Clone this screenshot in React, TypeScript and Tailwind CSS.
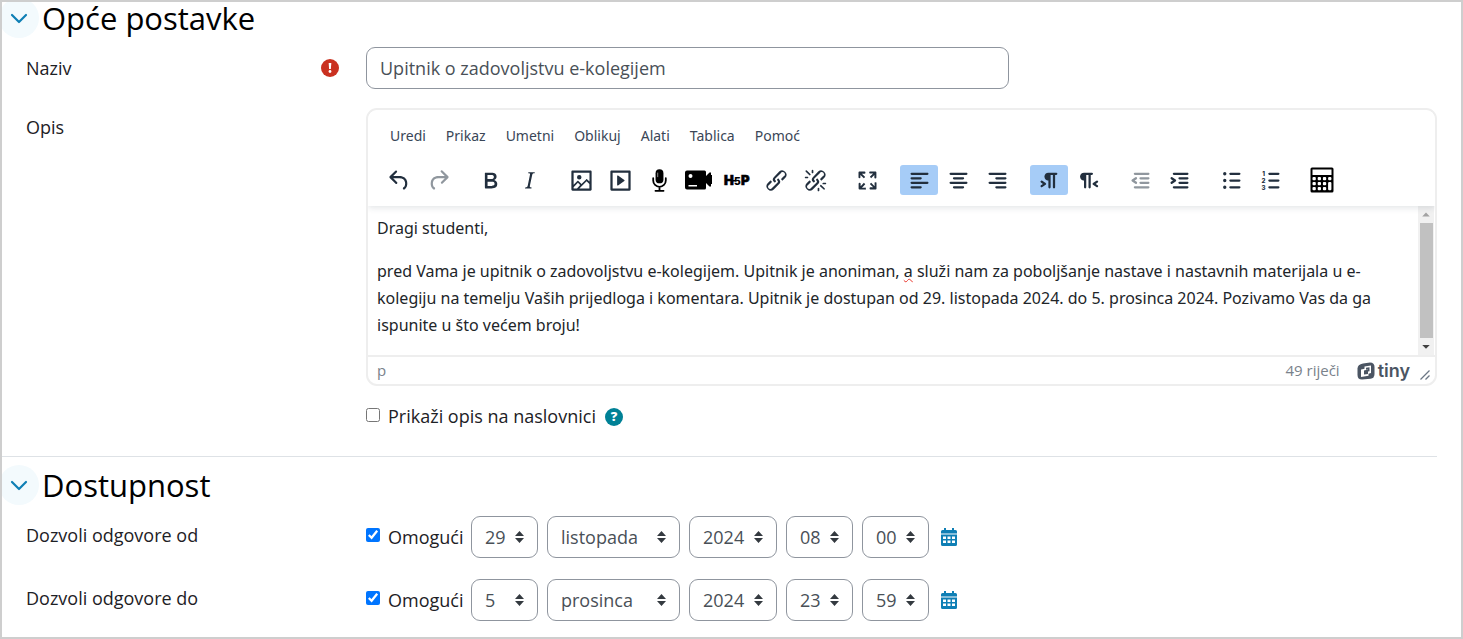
import React from "react";

const ICON = "size-[27px] shrink-0 fill-current";

const LINK =
  "M6.2 12.3a1 1 0 0 1 1.4 1.4l-2 2a2 2 0 1 0 2.6 2.8l4.8-4.8a1 1 0 0 0 0-1.4 1 1 0 1 1 1.4-1.3 2.9 2.9 0 0 1 0 4L9.6 20a3.9 3.9 0 0 1-5.5-5.5l2-2Zm11.6-.6a1 1 0 0 1-1.4-1.4l2-2a2 2 0 1 0-2.6-2.8L11 10.3a1 1 0 0 0 0 1.4A1 1 0 1 1 9.6 13a2.9 2.9 0 0 1 0-4L14.4 4a3.9 3.9 0 0 1 5.5 5.5l-2 2Z";

const PATHS: Record<string, string> = {
  undo: "M6.4 8H12c3.7 0 6.2 2 6.8 5.1.6 2.7-.4 5.6-2.3 6.8a1 1 0 0 1-1-1.8c1.1-.6 1.8-2.7 1.4-4.6-.5-2.1-2.1-3.5-4.9-3.5H6.4l3.3 3.3a1 1 0 1 1-1.4 1.4l-5-5a1 1 0 0 1 0-1.4l5-5a1 1 0 0 1 1.4 1.4L6.4 8Z",
  redo: "M17.6 10H12c-2.8 0-4.4 1.4-4.9 3.5-.4 2 .3 4 1.4 4.6a1 1 0 1 1-1 1.8c-2-1.2-2.9-4.1-2.3-6.8.6-3 3-5.1 6.8-5.1h5.6l-3.3-3.3a1 1 0 1 1 1.4-1.4l5 5a1 1 0 0 1 0 1.4l-5 5a1 1 0 0 1-1.4-1.4l3.3-3.3Z",
  bold: "M7.8 19c-.3 0-.5 0-.6-.2l-.2-.5V5.7c0-.2 0-.4.2-.5l.6-.2h5c1.5 0 2.7.3 3.5 1 .7.6 1.1 1.4 1.1 2.5a3 3 0 0 1-.6 1.9c-.4.6-1 1-1.6 1.2.4.1.9.3 1.3.6s.8.7 1 1.2c.4.4.5 1 .5 1.6 0 1.3-.4 2.3-1.3 3-.8.7-2.1 1-3.8 1H7.8Zm5-8.3c.6 0 1.2-.1 1.6-.5.4-.3.6-.7.6-1.3 0-1.1-.8-1.7-2.3-1.7H9.3v3.5h3.4Zm.5 6c.7 0 1.3-.1 1.7-.4.4-.4.6-.9.6-1.5s-.2-1-.7-1.4c-.4-.3-1-.4-2-.4H9.4v3.8h4Z",
  italic: "m16.7 4.7-.1.9h-.3c-.6 0-1 0-1.4.3-.3.3-.4.6-.5 1.1l-2.1 9.8v.6c0 .5.4.8 1.4.8h.2l-.2.8H8l.2-.8h.2c1.1 0 1.8-.5 2-1.5l2-9.8.1-.5c0-.6-.4-.8-1.4-.8h-.3l.2-.9h5.8Z",
  image: "m5 15.7 3.3-3.2c.3-.3.7-.3 1 0L12 15l4.1-4c.3-.4.8-.4 1 0l2 1.9V5H5v10.7ZM5 18V19h3l2.8-2.9-2-2L5 17.9Zm14-3-2.5-2.4-6.4 6.5H19v-4ZM4 3h16c.6 0 1 .4 1 1v16c0 .6-.4 1-1 1H4a1 1 0 0 1-1-1V4c0-.6.4-1 1-1Zm6 8a2 2 0 1 0 0-4 2 2 0 0 0 0 4Z",
  media: "M4 3h16c.6 0 1 .4 1 1v16c0 .6-.4 1-1 1H4a1 1 0 0 1-1-1V4c0-.6.4-1 1-1Zm1 2v14h14V5H5Zm4.800 2.600 5.600 4a.5.5 0 0 1 0 .8l-5.600 4A.5.5 0 0 1 9 16V8a.5.5 0 0 1 .8-.4Z",
  link: LINK,
  unlink:
    LINK +
    "M7.6 6.3a.8.8 0 0 1-1 1.1L3.3 4.2a.7.7 0 1 1 1-1l3.2 3.1ZM5.1 8.6a.8.8 0 0 1 0 1.5H3a.8.8 0 0 1 0-1.5H5Zm5-3.5a.8.8 0 0 1-1.5 0V3a.8.8 0 0 1 1.5 0V5Zm6 11.8a.8.8 0 0 1 1-1l3.2 3.2a.8.8 0 0 1-1 1L16 17Zm-2.2 2a.8.8 0 0 1 1.5 0V21a.8.8 0 0 1-1.5 0V19Zm5-3.5a.7.7 0 1 1 0-1.5H21a.8.8 0 0 1 0 1.5H19Z",
  fullscreen:
    "m15.3 10-1.2-1.3 2.9-3h-2.3a.9.9 0 1 1 0-1.7H19c.5 0 .9.4.9.9v4.4a.9.9 0 1 1-1.8 0V7l-2.9 3Zm0 4 3 3v-2.3a.9.9 0 1 1 1.7 0V19c0 .5-.4.9-.9.9h-4.4a.9.9 0 1 1 0-1.8H17l-3-2.9 1.3-1.2ZM10 15.4l-2.9 3h2.3a.9.9 0 1 1 0 1.7H5a.9.9 0 0 1-.9-.9v-4.4a.9.9 0 1 1 1.8 0V17l2.9-3 1.2 1.3ZM8.7 10 5.7 7v2.3a.9.9 0 0 1-1.7 0V5c0-.5.4-.9.9-.9h4.4a.9.9 0 0 1 0 1.8H7l3 2.900-1.300 1.200Z",
  left: "M5 5h14c.6 0 1 .4 1 1s-.4 1-1 1H5a1 1 0 1 1 0-2Zm0 4h8c.6 0 1 .4 1 1s-.4 1-1 1H5a1 1 0 1 1 0-2Zm0 8h8c.6 0 1 .4 1 1s-.4 1-1 1H5a1 1 0 0 1 0-2Zm0-4h14c.6 0 1 .4 1 1s-.4 1-1 1H5a1 1 0 0 1 0-2Z",
  center:
    "M5 5h14c.6 0 1 .4 1 1s-.4 1-1 1H5a1 1 0 1 1 0-2Zm3 4h8c.6 0 1 .4 1 1s-.4 1-1 1H8a1 1 0 1 1 0-2Zm0 8h8c.6 0 1 .4 1 1s-.4 1-1 1H8a1 1 0 0 1 0-2Zm-3-4h14c.6 0 1 .4 1 1s-.4 1-1 1H5a1 1 0 0 1 0-2Z",
  right:
    "M5 5h14c.6 0 1 .4 1 1s-.4 1-1 1H5a1 1 0 1 1 0-2Zm6 4h8c.6 0 1 .4 1 1s-.4 1-1 1h-8a1 1 0 0 1 0-2Zm0 8h8c.6 0 1 .4 1 1s-.4 1-1 1h-8a1 1 0 0 1 0-2Zm-6-4h14c.6 0 1 .4 1 1s-.4 1-1 1H5a1 1 0 0 1 0-2Z",
  ltr: "M11 5h7a1 1 0 0 1 0 2h-1v11a1 1 0 0 1-2 0V7h-2v11a1 1 0 0 1-2 0v-6c-.5 0-1 0-1.4-.3A3.4 3.4 0 0 1 7.8 10a3.3 3.3 0 0 1 0-2.8 3.4 3.4 0 0 1 1.8-1.8L11 5ZM4.4 16.2 6.2 15l-1.8-1.2a1 1 0 0 1 1.2-1.6l3 2a1 1 0 0 1 0 1.6l-3 2a1 1 0 1 1-1.2-1.6Z",
  rtl: "M8 5h7a1 1 0 0 1 0 2h-1v11a1 1 0 0 1-2 0V7h-2v11a1 1 0 0 1-2 0v-6c-.5 0-1 0-1.4-.3A3.4 3.4 0 0 1 4.8 10a3.3 3.3 0 0 1 0-2.8 3.4 3.4 0 0 1 1.8-1.8L8 5Zm12.2 11.2a1 1 0 1 1-1.2 1.6l-3-2a1 1 0 0 1 0-1.6l3-2a1 1 0 1 1 1.2 1.6L18.4 15l1.8 1.2Z",
  outdent:
    "M7 5h12c.6 0 1 .4 1 1s-.4 1-1 1H7a1 1 0 1 1 0-2Zm5 4h7c.6 0 1 .4 1 1s-.4 1-1 1h-7a1 1 0 0 1 0-2Zm0 4h7c.6 0 1 .4 1 1s-.4 1-1 1h-7a1 1 0 0 1 0-2Zm-5 4h12a1 1 0 0 1 0 2H7a1 1 0 0 1 0-2Zm1.6-3.8a1 1 0 0 1-1.2 1.6l-3-2a1 1 0 0 1 0-1.6l3-2a1 1 0 0 1 1.2 1.6L6.8 12l1.8 1.2Z",
  indent:
    "M7 5h12c.6 0 1 .4 1 1s-.4 1-1 1H7a1 1 0 1 1 0-2Zm5 4h7c.6 0 1 .4 1 1s-.4 1-1 1h-7a1 1 0 0 1 0-2Zm0 4h7c.6 0 1 .4 1 1s-.4 1-1 1h-7a1 1 0 0 1 0-2Zm-5 4h12a1 1 0 0 1 0 2H7a1 1 0 0 1 0-2Zm-2.6-3.8L6.2 12l-1.8-1.2a1 1 0 0 1 1.2-1.6l3 2a1 1 0 0 1 0 1.6l-3 2a1 1 0 1 1-1.2-1.6Z",
  bullets:
    "M11 5h8a1 1 0 0 1 0 2h-8a1 1 0 0 1 0-2Zm0 6h8a1 1 0 0 1 0 2h-8a1 1 0 0 1 0-2Zm0 6h8a1 1 0 0 1 0 2h-8a1 1 0 0 1 0-2ZM4.500 6a1.500 1.500 0 1 0 3 0 1.500 1.500 0 1 0-3 0Zm0 6a1.500 1.500 0 1 0 3 0 1.500 1.500 0 1 0-3 0Zm0 6a1.500 1.500 0 1 0 3 0 1.500 1.500 0 1 0-3 0Z",
};

function Glyph({ name }: { name: string }) {
  return (
    <svg viewBox="0 0 24 24" className={ICON} fillRule="evenodd" aria-hidden="true">
      <path d={PATHS[name]} />
    </svg>
  );
}

function MicIcon() {
  return (
    <svg viewBox="0 0 24 24" className={ICON} aria-hidden="true">
      <rect x="8.500" y="2" width="7" height="12.500" rx="3.500" fill="#000" />
      <path d="M10.400 5v4" stroke="#999" strokeWidth=".8" />
      <path d="M6.400 10v2a5.600 5.600 0 0 0 11.200 0v-2M12 17.600v3.600M8.400 21.200h7.200" fill="none" stroke="#000" strokeWidth="1.600" strokeLinecap="round" />
    </svg>
  );
}

function CameraIcon() {
  return (
    <svg viewBox="0 0 27 20" className="h-5 w-[27px] shrink-0 fill-black" aria-hidden="true">
      <path fillRule="evenodd" d="M2 .5h17.500a1.500 1.500 0 0 1 1.500 1.500v4l3.500-3.500h1.500v2.500h1v9h-1v2.500h-1.500L21 13v5a1.500 1.500 0 0 1-1.500 1.500H2A2 2 0 0 1 0 17.500v-15a2 2 0 0 1 2-2ZM5.500 4a2 2 0 1 0 0 4 2 2 0 0 0 0-4ZM3.500 15v1.500H12V15H3.500Z" />
    </svg>
  );
}

function H5pIcon() {
  return (
    <svg viewBox="0 0 27 20" className="h-5 w-[27px] shrink-0 overflow-visible fill-black" aria-hidden="true">
      <g fontFamily="Inter, sans-serif" fontWeight="900">
        <text x="0" y="15" fontSize="13" stroke="#000" strokeWidth=".6">H</text>
        <text x="10" y="15" fontSize="10">5</text>
        <text x="17" y="15" fontSize="13" stroke="#000" strokeWidth=".6">P</text>
      </g>
      <path d="M9 10h3v1.500H9Z" />
    </svg>
  );
}

function NumberedIcon() {
  return (
    <svg viewBox="0 0 24 24" className={ICON} aria-hidden="true">
      <path d="M11 5h8a1 1 0 0 1 0 2h-8a1 1 0 0 1 0-2Zm0 6h8a1 1 0 0 1 0 2h-8a1 1 0 0 1 0-2Zm0 6h8a1 1 0 0 1 0 2h-8a1 1 0 0 1 0-2Z" />
      <g fontFamily="Inter, sans-serif" fontWeight="800" fontSize="5.500">
        <text x="4.600" y="8">1</text>
        <text x="4" y="14">2</text>
        <text x="4" y="20">3</text>
      </g>
    </svg>
  );
}

function CalculatorIcon() {
  return (
    <svg viewBox="0 0 24 26" className="h-[26px] w-6 shrink-0 fill-black" aria-hidden="true">
      <path fillRule="evenodd" d="M2 .5h20A1.500 1.500 0 0 1 23.500 2v22a1.500 1.500 0 0 1-1.500 1.500H2A1.500 1.500 0 0 1 .5 24V2A1.500 1.500 0 0 1 2 .5ZM2.500 2.500v5.500h19V2.500h-19Z" />
      <g fill="#fff">
        {[10, 15, 20].map((y) =>
          [2.5, 7.7, 12.9, 18.1].map((x) =>
            x > 18 && y > 15 ? null : <rect key={`${x}-${y}`} x={x} y={y} width="3.300" height={x > 18 && y > 14 ? 8.3 : 3.3} rx="1" />
          )
        )}
      </g>
    </svg>
  );
}

type Tool = { label: string; icon: React.ReactNode; active?: boolean; disabled?: boolean };

const g = (name: string) => <Glyph name={name} />;

const TOOLS: Tool[][] = [
  [{ label: "Poništi", icon: g("undo") }, { label: "Ponovi", icon: g("redo"), disabled: true }],
  [{ label: "Podebljano", icon: g("bold") }, { label: "Kurziv", icon: g("italic") }],
  [
    { label: "Slika", icon: g("image") },
    { label: "Multimedija", icon: g("media") },
    { label: "Snimi zvuk", icon: <MicIcon /> },
    { label: "Snimi video", icon: <CameraIcon /> },
    { label: "Umetni H5P", icon: <H5pIcon /> },
    { label: "Poveznica", icon: g("link") },
    { label: "Ukloni poveznicu", icon: g("unlink") },
  ],
  [{ label: "Cijeli zaslon", icon: g("fullscreen") }],
  [
    { label: "Poravnaj lijevo", icon: g("left"), active: true },
    { label: "Centriraj", icon: g("center") },
    { label: "Poravnaj desno", icon: g("right") },
  ],
  [{ label: "Slijeva nadesno", icon: g("ltr"), active: true }, { label: "Zdesna nalijevo", icon: g("rtl") }],
  [{ label: "Smanji uvlaku", icon: g("outdent"), disabled: true }, { label: "Povećaj uvlaku", icon: g("indent") }],
  [{ label: "Grafičke oznake", icon: g("bullets") }, { label: "Numerirani popis", icon: <NumberedIcon /> }],
  [{ label: "Uređivač jednadžbi", icon: <CalculatorIcon /> }],
];

const MENUS = ["Uredi", "Prikaz", "Umetni", "Oblikuj", "Alati", "Tablica", "Pomoć"];

function SectionHeading({ title }: { title: string }) {
  return (
    <div className="flex h-8 items-center gap-[3px]">
      <button type="button" aria-label={title} className="-ml-[3px] grid size-10 shrink-0 place-items-center rounded-full bg-[#f3fafd] text-[#0f7fb5]">
        <svg viewBox="0 0 20 20" className="size-5 fill-none stroke-current" strokeWidth="2.200" strokeLinecap="round" strokeLinejoin="round" aria-hidden="true">
          <path d="m3 7 7 7 7-7" />
        </svg>
      </button>
      <h2 className="text-[31px] leading-8 text-black">{title}</h2>
    </div>
  );
}

type RowProps = { label: string; htmlFor: string; required?: boolean; compact?: boolean; children: React.ReactNode };

function Row({ label, htmlFor, required, compact, children }: RowProps) {
  return (
    <div className="flex pl-6">
      <div className={`flex w-[340px] shrink-0 items-start justify-between pr-[27px] ${compact ? "pt-1.5" : "pt-2"}`}>
        <label htmlFor={htmlFor}>{label}</label>
        {required && (
          <svg viewBox="0 0 18 18" className="mt-1 size-[18px]" role="img" aria-label="Obavezno">
            <circle cx="9" cy="9" r="9" fill="#ca3120" />
            <path d="M7.700 4h2.600l-.4 6H8.100Z" fill="#fff" />
            <circle cx="9" cy="12.500" r="1.400" fill="#fff" />
          </svg>
        )}
      </div>
      <div className="min-w-0 flex-1">{children}</div>
    </div>
  );
}

function Picker({ label, value, width }: { label: string; value: string; width: string }) {
  return (
    <div className={`relative ${width}`}>
      <select aria-label={label} defaultValue={value} className="h-[42px] w-full appearance-none rounded-[9px] border border-[#8f959e] bg-white pl-[13px] text-[#495057]">
        <option>{value}</option>
      </select>
      <svg viewBox="0 0 9 12" className="pointer-events-none absolute top-[15px] right-3.5 h-3 w-[9px] fill-[#343a40]" aria-hidden="true">
        <path d="M4.500 0 9 5H0ZM4.500 12 0 7h9Z" />
      </svg>
    </div>
  );
}

function DateRow({ id, label, values }: { id: string; label: string; values: string[] }) {
  return (
    <Row label={label} htmlFor={id} compact>
      <div className="flex items-center gap-[9px]">
        <div className="flex items-center gap-2">
          <input id={id} type="checkbox" defaultChecked className="mb-1 size-3.5" />
          <label htmlFor={id} className="w-[74px]">Omogući</label>
        </div>
        <Picker label="Dan" value={values[0]} width="w-[67px]" />
        <Picker label="Mjesec" value={values[1]} width="w-[133px]" />
        <Picker label="Godina" value={values[2]} width="w-[88px]" />
        <Picker label="Sat" value={values[3]} width="w-[67px]" />
        <Picker label="Minuta" value={values[4]} width="w-[67px]" />
        <a href="#kalendar" aria-label="Kalendar" className="ml-[3px] text-[#0f7fb5]">
          <svg viewBox="0 0 16 18" className="h-[18px] w-4" aria-hidden="true">
            <path fill="currentColor" fillRule="evenodd" d="M3 0h2v2h6V0h2v2h1.500A1.500 1.500 0 0 1 16 3.500V5.500H0V3.500A1.500 1.500 0 0 1 1.500 2H3ZM0 6.500h16v10a1.500 1.500 0 0 1-1.500 1.500h-13A1.500 1.500 0 0 1 0 16.500ZM2 8.500v2.500h3V8.500Zm4.500 0v2.500h3V8.500Zm4.500 0v2.500h3V8.500ZM2 12.500V15h3v-2.500Zm4.500 0V15h3v-2.500Zm4.500 0V15h3v-2.500Z" />
          </svg>
        </a>
      </div>
    </Row>
  );
}

function Editor() {
  return (
    <div className="overflow-hidden rounded-[11px] border-2 border-[#eeeeee] font-['Noto_Sans',sans-serif]">
      <div className="relative z-10 bg-white px-3 pt-2 shadow-[0_2px_6px_rgba(34,47,62,0.12)]">
        <div role="menubar" className="flex h-9 items-center text-sm text-[#3a4657]">
          {MENUS.map((m) => (
            <button key={m} type="button" role="menuitem" className="px-2.5">{m}</button>
          ))}
        </div>
        <div role="toolbar" aria-label="Alatna traka" className="flex h-[52px] items-center gap-3.5">
          {TOOLS.map((group, i) => (
            <div key={i} className="flex gap-px">
              {group.map((t) => (
                <button
                  key={t.label}
                  type="button"
                  aria-label={t.label}
                  disabled={t.disabled}
                  className={`grid h-[30px] w-[38px] place-items-center rounded-[3px] ${t.active ? "bg-[#a6ccf7]" : ""} ${t.disabled ? "text-[#222f3e]/50" : "text-[#222f3e]"}`}
                >
                  {t.icon}
                </button>
              ))}
            </div>
          ))}
        </div>
      </div>
      <div className="flex border-b-2 border-[#eeeeee]">
        <div id="opis" role="textbox" aria-label="Opis" className="min-w-0 flex-1 px-[9px] pt-[9px] pb-4 text-base leading-[27px] text-[#212529]">
          <p className="mb-4">Dragi studenti,</p>
          <p>
            pred Vama je upitnik o zadovoljstvu e-kolegijem. Upitnik je anoniman,{" "}
            <span className="underline decoration-[#e8372c] decoration-wavy decoration-1">a</span> služi nam za poboljšanje nastave i nastavnih materijala u e-kolegiju na temelju Vaših prijedloga i komentara. Upitnik je dostupan od 29. listopada 2024. do 5. prosinca 2024. Pozivamo Vas da ga ispunite u što većem broju!
          </p>
        </div>
        <div className="mr-px flex w-4 flex-col items-center bg-[#f1f1f1]" aria-hidden="true">
          <svg viewBox="0 0 17 17" className="h-[17px] w-full"><path d="M8.500 6.500 12.500 10.500h-8Z" fill="#a3a3a3" /></svg>
          <div className="w-[13px] flex-1 bg-[#c1c1c1]" />
          <svg viewBox="0 0 17 17" className="h-[17px] w-full"><path d="M8.500 11 4.500 7h8Z" fill="#404040" /></svg>
        </div>
      </div>
      <div className="flex h-[27px] items-center pr-[5px] pl-[9px] font-['Open_Sans',sans-serif] text-[15px] text-[#7a828b]">
        <span className="flex-1">p</span>
        <span>49 riječi</span>
        <span className="ml-[17px] flex items-center gap-[3px] text-[#4b5563]">
          <svg viewBox="0 0 18 18" className="size-[18px]" aria-hidden="true">
            <path fill="currentColor" d="M6 1.500 13 .5q4.500 0 4.500 4.500v7q0 4-4 4.700L5 17.500q-4.500 0-4.500-4.500V6.500q0-4 5.500-5Z" />
            <path fill="#fff" fillRule="evenodd" d="M7.500 4.500 14 3.500v7.500l-2.500.7v2L4 15V7.500l3.500-.7ZM7 8.500v4l4-.5V7.500Z" />
            <path fill="currentColor" d="M9 5.800 12.500 5.300v4l-1.500.2V7.500L9 7.800ZM7.800 9.200l2.400-.4v2.400l-2.400.4Z" />
          </svg>
          <span className="font-[Inter] text-[18px] font-semibold">tiny</span>
        </span>
        <svg viewBox="0 0 10 10" className="mt-2 ml-2.5 size-2.5 stroke-[#6b7684]" strokeWidth="1.300" aria-hidden="true"><path d="m.5 9.500 9-9M5.500 9.500l4-4" /></svg>
      </div>
    </div>
  );
}

export default function App() {
  return (
    <main className="min-h-screen overflow-hidden border-2 border-[#cecece] bg-white pb-3 font-['Open_Sans',sans-serif] text-[18px] leading-[27px] text-[#1d2125]">
      <section className="mr-6 border-b border-[#dee2e6] pb-[26px]">
        <SectionHeading title="Opće postavke" />
        <div className="mt-[13px] flex flex-col gap-[19px]">
          <Row label="Naziv" htmlFor="naziv" required>
            <input id="naziv" type="text" defaultValue="Upitnik o zadovoljstvu e-kolegijem" className="h-[42px] w-3/5 rounded-[9px] border border-[#8f959e] px-[13px] text-[#495057]" />
          </Row>
          <Row label="Opis" htmlFor="opis" compact>
            <Editor />
            <div className="mt-[17px] flex items-center gap-2">
              <input id="prikazi" type="checkbox" className="mb-1 size-3.5" />
              <label htmlFor="prikazi">Prikaži opis na naslovnici</label>
              <button type="button" aria-label="Pomoć" className="ml-px grid size-[18px] place-items-center rounded-full bg-[#008196] text-[13px] leading-none font-extrabold text-white">?</button>
            </div>
          </Row>
        </div>
      </section>
      <section className="pt-3">
        <SectionHeading title="Dostupnost" />
        <div className="mt-[15px] flex flex-col gap-[21px]">
          <DateRow id="od" label="Dozvoli odgovore od" values={["29", "listopada", "2024", "08", "00"]} />
          <DateRow id="do" label="Dozvoli odgovore do" values={["5", "prosinca", "2024", "23", "59"]} />
        </div>
      </section>
    </main>
  );
}
